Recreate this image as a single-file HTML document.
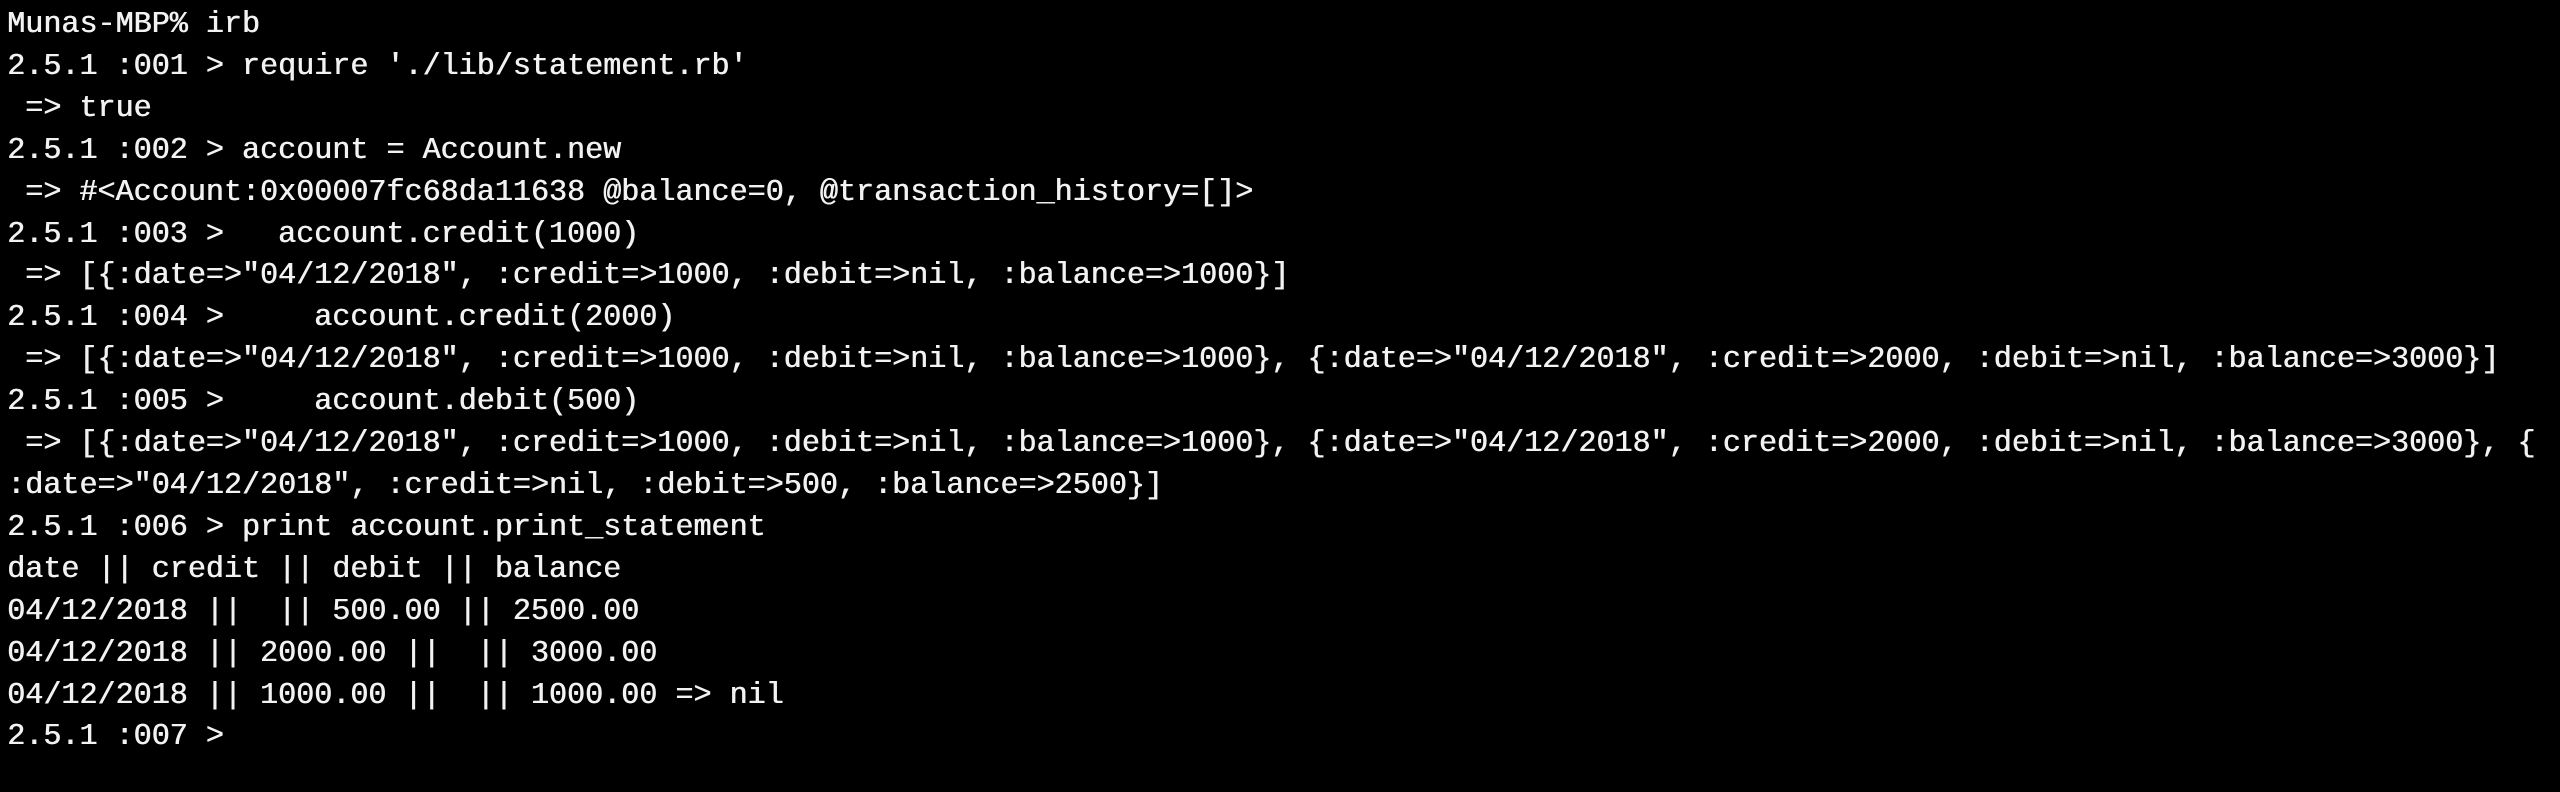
<!DOCTYPE html>
<html><head><meta charset="utf-8"><style>
html,body{margin:0;padding:0;background:#000;width:2560px;height:792px;overflow:hidden}
pre{margin:0;padding:5px 0 0 7px;font-family:"Liberation Mono","DejaVu Sans Mono",monospace;font-size:30.1px;line-height:41.9px;color:#f2f2f2;letter-spacing:0;text-shadow:0.6px 0 0 #f2f2f2}
</style></head><body><pre>Munas-MBP% irb
2.5.1 :001 &gt; require './lib/statement.rb'
 =&gt; true
2.5.1 :002 &gt; account = Account.new
 =&gt; #&lt;Account:0x00007fc68da11638 @balance=0, @transaction_history=[]&gt;
2.5.1 :003 &gt;   account.credit(1000)
 =&gt; [{:date=&gt;"04/12/2018", :credit=&gt;1000, :debit=&gt;nil, :balance=&gt;1000}]
2.5.1 :004 &gt;     account.credit(2000)
 =&gt; [{:date=&gt;"04/12/2018", :credit=&gt;1000, :debit=&gt;nil, :balance=&gt;1000}, {:date=&gt;"04/12/2018", :credit=&gt;2000, :debit=&gt;nil, :balance=&gt;3000}]
2.5.1 :005 &gt;     account.debit(500)
 =&gt; [{:date=&gt;"04/12/2018", :credit=&gt;1000, :debit=&gt;nil, :balance=&gt;1000}, {:date=&gt;"04/12/2018", :credit=&gt;2000, :debit=&gt;nil, :balance=&gt;3000}, {
:date=&gt;"04/12/2018", :credit=&gt;nil, :debit=&gt;500, :balance=&gt;2500}]
2.5.1 :006 &gt; print account.print_statement
date || credit || debit || balance
04/12/2018 ||  || 500.00 || 2500.00
04/12/2018 || 2000.00 ||  || 3000.00
04/12/2018 || 1000.00 ||  || 1000.00 =&gt; nil
2.5.1 :007 &gt;</pre></body></html>
